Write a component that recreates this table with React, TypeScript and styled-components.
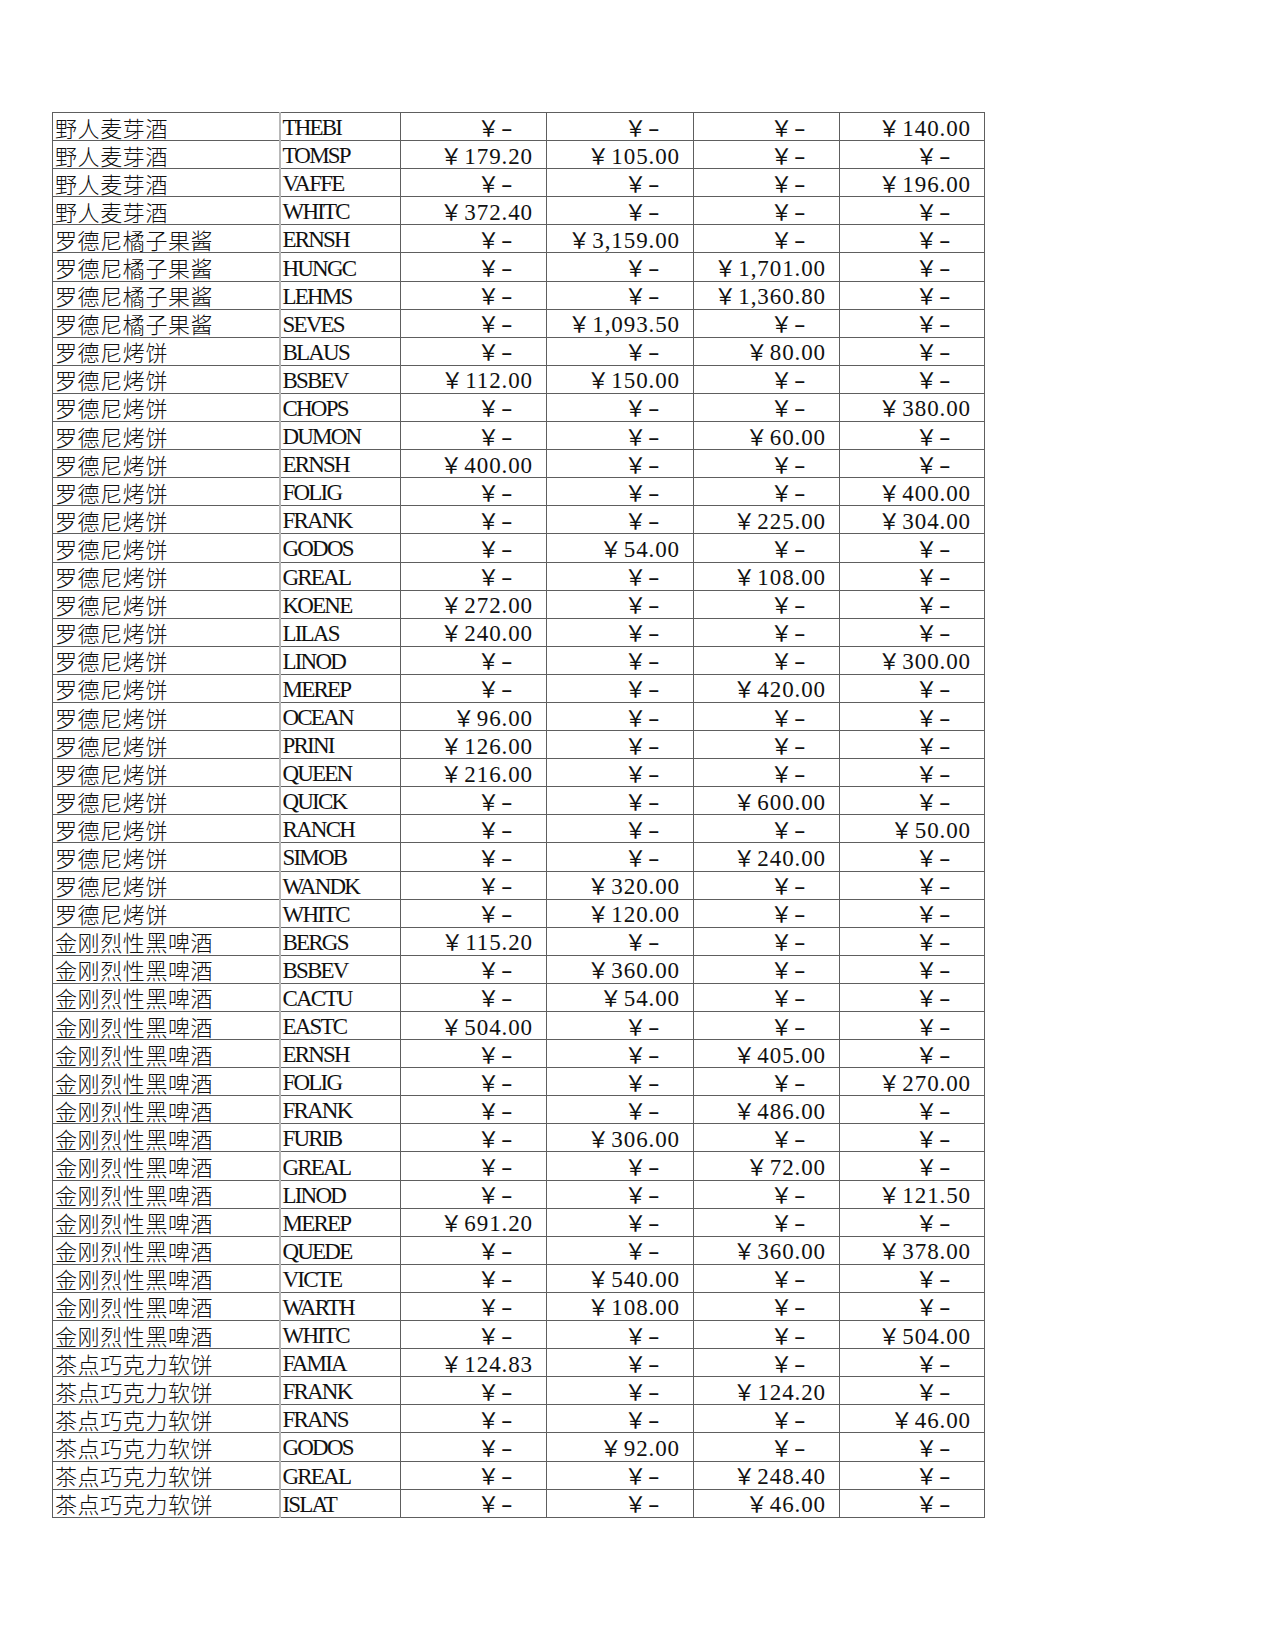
import React from 'react';
import styled, { createGlobalStyle } from 'styled-components';

const GlobalStyle = createGlobalStyle`
  html, body {
    margin: 0;
    padding: 0;
    background: #ffffff;
  }
  body {
    font-family: "Liberation Serif", "Noto Sans CJK SC", serif;
    color: #111;
  }
`;

// product | customer | q1 q2 q3 q4 ("-" = empty)
const raw = `野人麦芽酒|THEBI|- - - 140.00
野人麦芽酒|TOMSP|179.20 105.00 - -
野人麦芽酒|VAFFE|- - - 196.00
野人麦芽酒|WHITC|372.40 - - -
罗德尼橘子果酱|ERNSH|- 3,159.00 - -
罗德尼橘子果酱|HUNGC|- - 1,701.00 -
罗德尼橘子果酱|LEHMS|- - 1,360.80 -
罗德尼橘子果酱|SEVES|- 1,093.50 - -
罗德尼烤饼|BLAUS|- - 80.00 -
罗德尼烤饼|BSBEV|112.00 150.00 - -
罗德尼烤饼|CHOPS|- - - 380.00
罗德尼烤饼|DUMON|- - 60.00 -
罗德尼烤饼|ERNSH|400.00 - - -
罗德尼烤饼|FOLIG|- - - 400.00
罗德尼烤饼|FRANK|- - 225.00 304.00
罗德尼烤饼|GODOS|- 54.00 - -
罗德尼烤饼|GREAL|- - 108.00 -
罗德尼烤饼|KOENE|272.00 - - -
罗德尼烤饼|LILAS|240.00 - - -
罗德尼烤饼|LINOD|- - - 300.00
罗德尼烤饼|MEREP|- - 420.00 -
罗德尼烤饼|OCEAN|96.00 - - -
罗德尼烤饼|PRINI|126.00 - - -
罗德尼烤饼|QUEEN|216.00 - - -
罗德尼烤饼|QUICK|- - 600.00 -
罗德尼烤饼|RANCH|- - - 50.00
罗德尼烤饼|SIMOB|- - 240.00 -
罗德尼烤饼|WANDK|- 320.00 - -
罗德尼烤饼|WHITC|- 120.00 - -
金刚烈性黑啤酒|BERGS|115.20 - - -
金刚烈性黑啤酒|BSBEV|- 360.00 - -
金刚烈性黑啤酒|CACTU|- 54.00 - -
金刚烈性黑啤酒|EASTC|504.00 - - -
金刚烈性黑啤酒|ERNSH|- - 405.00 -
金刚烈性黑啤酒|FOLIG|- - - 270.00
金刚烈性黑啤酒|FRANK|- - 486.00 -
金刚烈性黑啤酒|FURIB|- 306.00 - -
金刚烈性黑啤酒|GREAL|- - 72.00 -
金刚烈性黑啤酒|LINOD|- - - 121.50
金刚烈性黑啤酒|MEREP|691.20 - - -
金刚烈性黑啤酒|QUEDE|- - 360.00 378.00
金刚烈性黑啤酒|VICTE|- 540.00 - -
金刚烈性黑啤酒|WARTH|- 108.00 - -
金刚烈性黑啤酒|WHITC|- - - 504.00
茶点巧克力软饼|FAMIA|124.83 - - -
茶点巧克力软饼|FRANK|- - 124.20 -
茶点巧克力软饼|FRANS|- - - 46.00
茶点巧克力软饼|GODOS|- 92.00 - -
茶点巧克力软饼|GREAL|- - 248.40 -
茶点巧克力软饼|ISLAT|- - 46.00 -`;

const rows = raw.split('\n').map((line) => {
  const [product, customer, amounts] = line.split('|');
  return { product, customer, amounts: amounts.split(' ') };
});

const columnWidths = [227, 121, 146, 147, 146, 145];

const Page = styled.div`
  padding: 112px 0 0 52px;
  min-height: 1650px;
  box-sizing: border-box;
`;

const Sheet = styled.table`
  border-collapse: collapse;
  table-layout: fixed;
  width: 932px;
  font-size: 23px;
`;

const Row = styled.tr`
  height: 28.1px;
`;

const Cell = styled.td`
  box-sizing: border-box;
  border: 1px solid #5e5e5e;
  padding: 0;
  height: 28.1px;
  line-height: 23px;
  white-space: nowrap;
  vertical-align: middle;
`;

const ProductCell = styled(Cell)`
  padding-left: 2px;
  padding-top: 1px;
  font-family: "Noto Sans CJK SC", sans-serif;
  font-weight: 300;
  font-size: 22px;
  letter-spacing: 0.6px;
`;

const CodeCell = styled(Cell)`
  border-left: 2px solid #b8b8b8;
  padding-left: 2px;
  padding-top: 2px;
  letter-spacing: -1.8px;
`;

const MoneyCell = styled(Cell)<{ $empty: boolean }>`
  text-align: right;
  padding-top: 2px;
  padding-right: ${(p) => (p.$empty ? 36 : 13)}px;
`;

const Yen = styled.span`
  display: inline-block;
  font-family: "Noto Sans CJK SC", sans-serif;
  font-weight: 400;
  font-size: 22px;
  line-height: 20px;
  margin-right: 2px;
`;

const Amount = styled.span<{ $dash?: boolean }>`
  letter-spacing: 0.9px;
  display: inline-block;
  line-height: 20px;
  transform: ${(p) => (p.$dash ? 'scaleX(1.5)' : 'none')};
  transform-origin: left center;
`;

export default function App() {
  return (
    <Page>
      <GlobalStyle />
      <Sheet>
        <colgroup>
          {columnWidths.map((w, i) => (
            <col key={i} style={{ width: w }} />
          ))}
        </colgroup>
        <tbody>
          {rows.map((r, i) => (
            <Row key={i}>
              <ProductCell>{r.product}</ProductCell>
              <CodeCell>{r.customer}</CodeCell>
              {r.amounts.map((a, j) => (
                <MoneyCell key={j} $empty={a === '-'}>
                  <Yen>￥</Yen>
                  <Amount $dash={a === '-'}>{a}</Amount>
                </MoneyCell>
              ))}
            </Row>
          ))}
        </tbody>
      </Sheet>
    </Page>
  );
}
